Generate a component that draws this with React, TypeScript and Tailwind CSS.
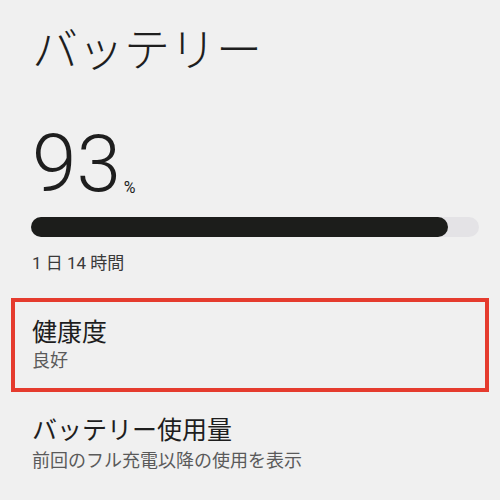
import React from 'react';

const jp = { fontFamily: 'Roboto, "Noto Sans CJK JP", sans-serif' };

const BatteryBar: React.FC<{ level: number }> = ({ level }) => (
  <div className="ml-[31px] mr-[21px] h-[20px] rounded-full bg-[#e4e3e6]">
    <div className="h-full rounded-full bg-[#1c1d1b]" style={{ width: `${level}%` }} />
  </div>
);

export default function App() {
  const level = 93;

  return (
    <div className="w-[500px] h-[500px] overflow-hidden bg-[#f0f0f0] text-[#1e1e1e]" style={jp}>
      <h1 className="pl-[32px] pt-[22px] text-[46px] leading-[56px] font-light">バッテリー</h1>

      <div className="mt-[46px] pl-[32px] flex items-baseline">
        <span className="text-[80px] leading-[80px] font-light">{level}</span>
        <span className="ml-[3px] text-[16px] leading-none relative top-[2px]">%</span>
      </div>

      <div className="mt-[13px]">
        <BatteryBar level={level} />
      </div>

      <p className="mt-[14px] pl-[32px] text-[17px] leading-[24px] text-[#3a3a3a]">1 日 14 時間</p>

      {/* selected row */}
      <div className="mt-[23px] mx-[11px] border-4 border-[#e53b2e] pl-[17px] pt-[15px] pb-[15px]">
        <div className="text-[25px] leading-[32px]">健康度</div>
        <div className="text-[18px] leading-[24px] text-[#5a5a5a]">良好</div>
      </div>

      <div className="mt-[23px] pl-[32px]">
        <div className="text-[25px] leading-[32px]">バッテリー使用量</div>
        <div className="mt-[2px] text-[18px] leading-[24px] text-[#5a5a5a]">前回のフル充電以降の使用を表示</div>
      </div>
    </div>
  );
}
